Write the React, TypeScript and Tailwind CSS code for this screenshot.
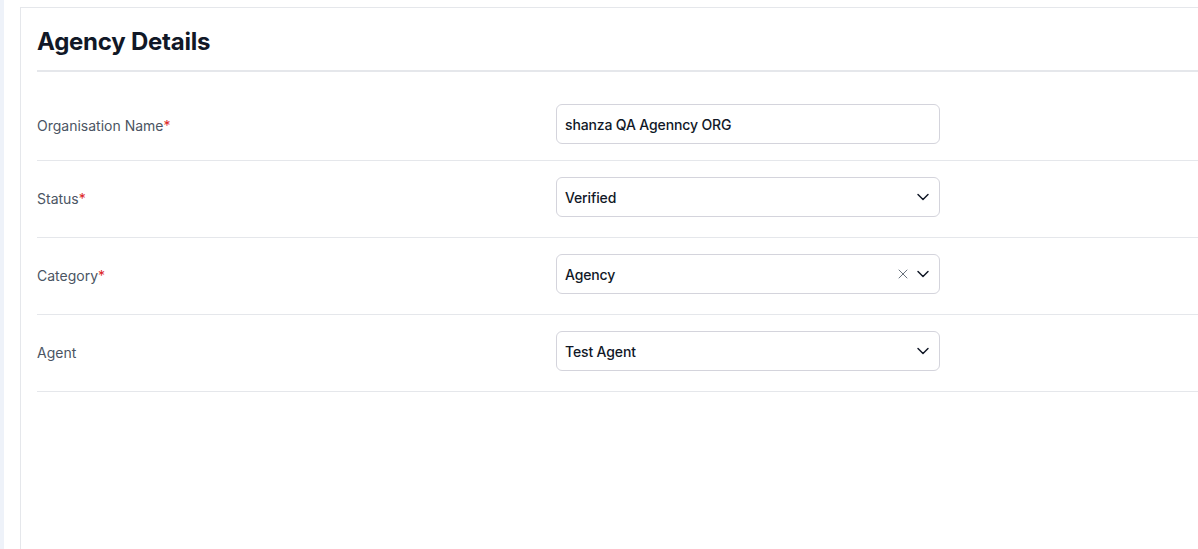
import { ChevronDown, X } from "lucide-react";

const font = { fontFamily: "Inter, 'Noto Sans', sans-serif" };

type Row = {
  label: string;
  required?: boolean;
  value: string;
  kind: "input" | "select" | "clearable";
};

const rows: Row[] = [
  { label: "Organisation Name", required: true, value: "shanza QA Agenncy ORG", kind: "input" },
  { label: "Status", required: true, value: "Verified", kind: "select" },
  { label: "Category", required: true, value: "Agency", kind: "clearable" },
  { label: "Agent", value: "Test Agent", kind: "select" },
];

const Field = ({ row }: { row: Row }) => (
  <div className="flex h-10 w-[384px] items-center rounded-md border border-[#d4d4dc] bg-white pl-[8px] pr-[6px]">
    <span className="flex-1 text-[14px] font-medium tracking-[-0.01em] text-[#111827]">{row.value}</span>
    {row.kind === "clearable" && (
      <X className="mr-[2px] h-[16px] w-[16px] text-[#4b5563]" strokeWidth={1.25} />
    )}
    {row.kind !== "input" && (
      <ChevronDown className="h-[20px] w-[20px] text-[#111827]" strokeWidth={1.75} />
    )}
  </div>
);

export default function App() {
  return (
    <div className="flex h-[549px] w-full overflow-hidden bg-white" style={font}>
      <div className="w-[4px] shrink-0 bg-[#eef2f9]" />
      <div className="flex flex-1 pl-4 pt-[7px]">
        <div className="flex-1 border-l border-t border-[#e5e7eb] pl-4">
          <div className="border-b-2 border-[#e5e7eb] pb-[12px] pt-[18px]">
            <h1 className="text-[24px] font-bold leading-8 tracking-[-0.01em] text-[#111827]">
              Agency Details
            </h1>
          </div>
          <div className="pt-4">
            {rows.map((row, i) => (
              <div
                key={row.label}
                className={`flex items-center border-b border-[#e5e7eb] pt-4 ${i === 0 ? "pb-4" : "pb-5"}`}
              >
                <div className="w-[519px] pt-[3px] text-[14px] text-[#4b5563]">
                  {row.label}
                  {row.required && <span className="text-[#dc2626]">*</span>}
                </div>
                <Field row={row} />
              </div>
            ))}
          </div>
        </div>
      </div>
    </div>
  );
}
